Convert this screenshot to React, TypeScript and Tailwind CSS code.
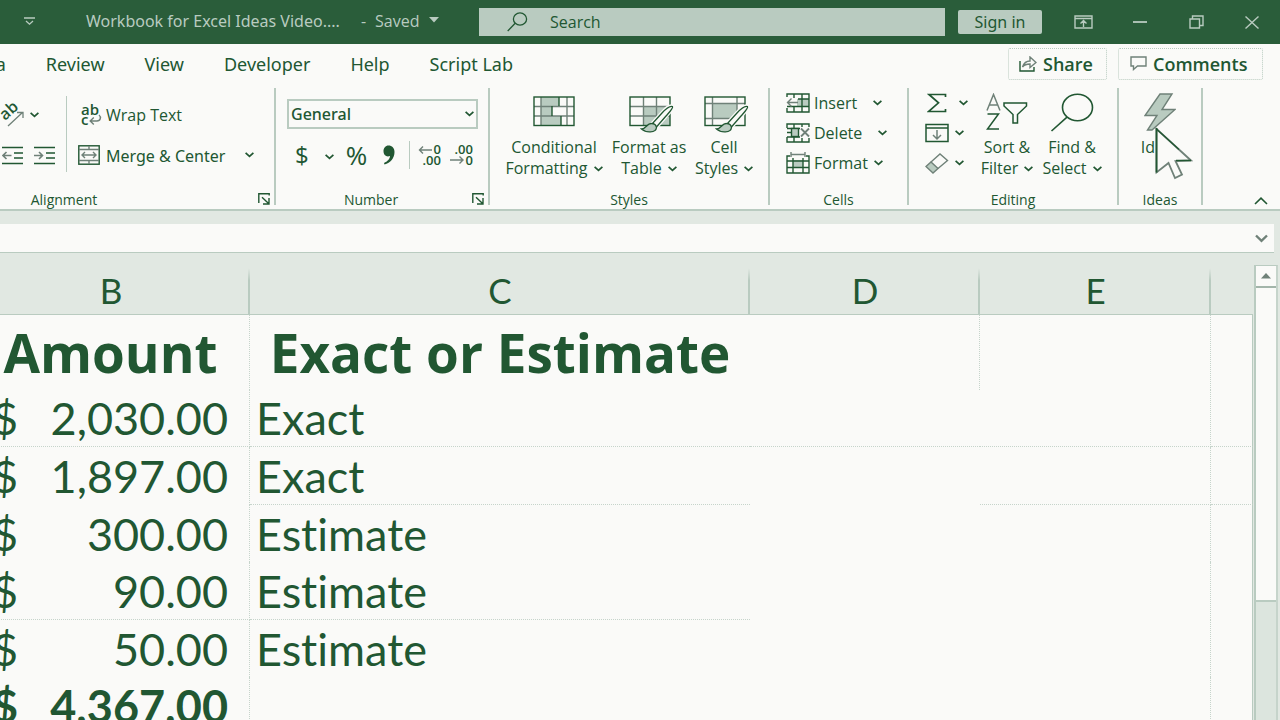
import type { ReactNode } from "react";

const DARK = "#215732";
const MID = "#6f8178";
const LIGHT = "#b9cbc0";
const PAPER = "#fafaf8";

function Chevron({ className = "" }: { className?: string }) {
  return (
    <svg className={`shrink-0 ${className}`} width="9" height="6" viewBox="0 0 9 6" fill="none" stroke={DARK} strokeWidth="1.7">
      <path d="M0.6 0.8 L4.5 4.4 L8.4 0.8" />
    </svg>
  );
}

function Launcher() {
  return (
    <svg width="12" height="12" viewBox="0 0 12 12" fill="none" stroke={DARK} strokeWidth="1.4">
      <path d="M0.8 10 V0.8 H11.2 V2.5" />
      <path d="M4 4.2 L10.6 10.6 M11 5 V11 H5" />
    </svg>
  );
}

function OrientationIcon() {
  return (
    <svg width="24" height="26" viewBox="0 0 24 26" fill="none" stroke={MID} strokeWidth="1.3">
      <text x="5" y="19" transform="rotate(-42 5 19)" fontFamily="Open Sans" fontWeight="600" fontSize="16" fill={DARK} stroke="none">ab</text>
      <path d="M8 24 L22.5 10.5 M17 10.5 H23 V16" />
    </svg>
  );
}

function IndentIcon({ outward = false }: { outward?: boolean }) {
  return (
    <svg width="21" height="19" viewBox="0 0 21 19" fill="none" stroke={DARK} strokeWidth="1.6">
      <path d="M0 1.5 H21 M12 7 H21 M12 12 H21 M0 17.5 H21" />
      <path stroke={MID} d={outward ? "M9.5 9.5 H1 M4.5 6 L1 9.5 L4.5 13" : "M0 9.5 H8.5 M5 6 L8.5 9.5 L5 13"} />
    </svg>
  );
}

function WrapIcon() {
  return (
    <svg width="21" height="22" viewBox="0 0 21 22" fill="none" stroke={MID} strokeWidth="1.4">
      <text x="0" y="11" fontFamily="Open Sans" fontWeight="600" fontSize="15" fill={DARK} stroke="none">ab</text>
      <text x="0" y="21" fontFamily="Open Sans" fontWeight="600" fontSize="15" fill={DARK} stroke="none">c</text>
      <path d="M18 11 C20.5 13 19.5 17 16 17 H9.5 M12.8 13.4 L9.2 17 L12.8 20.6" />
    </svg>
  );
}

function MergeIcon() {
  return (
    <svg width="22" height="20" viewBox="0 0 22 20" fill="none" stroke={DARK} strokeWidth="1.4">
      <rect x="0.8" y="0.8" width="20.4" height="18.4" />
      <path d="M1 4.5 H21 M1 15.5 H21 M11 1 V4.5 M11 15.5 V19" stroke={MID} />
      <path d="M4 10 H18 M7 7 L4 10 L7 13 M15 7 L18 10 L15 13" stroke={MID} />
    </svg>
  );
}

function DecimalIcon({ increase = false }: { increase?: boolean }) {
  return (
    <svg width="24" height="22" viewBox="0 0 24 22" fill="none" stroke={MID} strokeWidth="1.4">
      <g fontFamily="Open Sans" fontSize="13" fontWeight="600" fill={DARK} stroke="none" textAnchor="end">
        <text x="23" y="10">{increase ? "0" : ".00"}</text>
        <text x="23" y="21">{increase ? ".00" : "0"}</text>
      </g>
      {increase ? <path d="M14 6 H1.5 M5 2.5 L1.5 6 L5 9.5" /> : <path d="M0 16 H13 M9.5 12.5 L13 16 L9.5 19.5" />}
    </svg>
  );
}

function Brush() {
  return (
    <g>
      <path d="M43.5 10.5 C41 9.5 37 12.5 33 17 L23 28 L27 31.5 L37 20 C41.5 15 44.5 12 43.5 10.5 Z" fill={PAPER} stroke={PAPER} strokeWidth="4" />
      <path d="M43.5 10.5 C41 9.5 37 12.5 33 17 L23 28 L27 31.5 L37 20 C41.5 15 44.5 12 43.5 10.5 Z" fill={PAPER} stroke={DARK} strokeWidth="1.3" />
      <path d="M22.5 27.5 C18 27 17.5 33 12.5 33 C17 37 27 37 27.5 31.5 C27 28.5 25 27.5 22.5 27.5 Z" fill={LIGHT} stroke={DARK} strokeWidth="1.3" />
    </g>
  );
}

function ConditionalIcon() {
  return (
    <svg width="42" height="38" viewBox="0 0 42 38" fill="none" strokeWidth="1.4">
      <path d="M8 1 H26 V10 H8 Z M8 10 H19 V20 H8 Z M8 20 H28 V29 H8 Z" fill={LIGHT} />
      <path d="M1 10.5 H41 M1 20 H41 M34 1 V29 M8 1 V29" stroke={MID} />
      <path d="M26 1 V10 M19 10 V20 M28 20 V29" stroke={DARK} />
      <rect x="1" y="1" width="40" height="28.5" stroke={DARK} />
    </svg>
  );
}

function TableStyleIcon() {
  return (
    <svg className="ml-1.5" width="46" height="38" viewBox="0 0 46 38" fill="none" strokeWidth="1.4">
      <path d="M15 10.5 H41 V29.5 H15 Z" fill={LIGHT} />
      <path d="M1 10.5 H41 M1 20 H41 M14.5 1 V29 M27.5 1 V29" stroke={MID} />
      <rect x="1" y="1" width="40" height="28.5" stroke={DARK} />
      <Brush />
    </svg>
  );
}

function CellStyleIcon() {
  return (
    <svg className="ml-1.5" width="46" height="38" viewBox="0 0 46 38" fill="none" strokeWidth="1.4">
      <path d="M8 7.5 H33 V22.5 H8 Z" fill={LIGHT} />
      <path d="M1 7.5 H41 M1 22.5 H33 M8.5 1 V29 M33 1 V22" stroke={MID} />
      <rect x="1" y="1" width="40" height="28.5" stroke={DARK} />
      <Brush />
    </svg>
  );
}

function InsertIcon() {
  return (
    <svg width="24" height="20" viewBox="0 0 24 20" fill="none" stroke={DARK} strokeWidth="1.4">
      <path d="M11 6 H23 V13 H11 Z" fill={LIGHT} stroke="none" />
      <path d="M1 4 V1 H23 V19 H1 V15 M1 13.5 H23 M8 1 V5 M16 1 V19 M8 14 V19 M12 6 H23" />
      <path d="M12 9.5 H1.5 M5.5 5.5 L1.5 9.5 L5.5 13.5" stroke={MID} />
    </svg>
  );
}

function DeleteIcon() {
  return (
    <svg width="24" height="20" viewBox="0 0 24 20" fill="none" stroke={DARK} strokeWidth="1.4">
      <path d="M1 5 V1 H23 V4 M1 5.5 H14 M8 1 V5 M16 1 V4 M1 14 V19 H23 V15 M1 14 H14 M8 14 V19 M16 15 V19 M1 9.5 H5" />
      <rect x="5.5" y="5.5" width="7" height="8" fill={LIGHT} />
      <path d="M15 5.5 L23 13.5 M23 5.5 L15 13.5" stroke={MID} strokeWidth="1.8" />
    </svg>
  );
}

function FormatIcon() {
  return (
    <svg width="24" height="22" viewBox="0 0 24 22" fill="none" stroke={DARK} strokeWidth="1.4">
      <path d="M7 8 H17 V15 H7 Z" fill={LIGHT} stroke="none" />
      <path d="M4 4 H1 V21 H23 V4 H20 M1 9 H23 M1 15.5 H23 M7 6 V21 M17 6 V21" />
      <path d="M5 2.5 H19 M5 0 V5 M19 0 V5" stroke={MID} />
    </svg>
  );
}

function SigmaIcon() {
  return (
    <svg width="20" height="20" viewBox="0 0 20 20" fill="none" stroke={DARK} strokeWidth="1.7">
      <path d="M18.5 4 V1.5 H2 L11.5 9.8 L1.5 18.5 H18.5 V16" />
    </svg>
  );
}

function FillIcon() {
  return (
    <svg width="24" height="20" viewBox="0 0 24 20" fill="none" stroke={DARK} strokeWidth="1.5">
      <path d="M1 1.5 H23 V18.5 H1 Z M1 5 H23" />
      <path d="M12 7 V16 M8 12 L12 16 L16 12" stroke={MID} />
    </svg>
  );
}

function EraserIcon() {
  return (
    <svg width="24" height="21" viewBox="0 0 24 21" fill="none" stroke={MID} strokeWidth="1.4">
      <path d="M1 13.5 L6 9 L13 15.5 L8 20 Z" fill={LIGHT} />
      <path d="M6 9 L15 1 L22.5 7.5 L13 15.5" />
    </svg>
  );
}

function SortFilterIcon() {
  return (
    <svg width="42" height="38" viewBox="0 0 42 38" fill="none" stroke={DARK} strokeWidth="1.5">
      <path d="M1 17.5 L7.5 1.5 L14 17.5 M3.5 12 H11.5" stroke={MID} />
      <path d="M1.5 21 H12.5 L1.5 36 H13" />
      <path d="M18 10 H40.5 V13 L31.5 21.5 V30 H27 V21.5 L18 13 Z" />
    </svg>
  );
}

function FindIcon() {
  return (
    <svg width="44" height="40" viewBox="0 0 44 40" fill="none" stroke={DARK} strokeWidth="1.6">
      <ellipse cx="27.5" cy="14.5" rx="15" ry="13.3" />
      <path d="M17 24.2 L1.5 38" />
    </svg>
  );
}

function SearchIcon() {
  return (
    <svg className="shrink-0" width="21" height="20" viewBox="0 0 21 20" fill="none" stroke={DARK} strokeWidth="1.3">
      <ellipse cx="13" cy="7" rx="6.6" ry="6.1" />
      <path d="M8.2 11.3 L0.7 19" />
    </svg>
  );
}

function BoltIcon() {
  return (
    <svg width="32" height="38" viewBox="0 0 32 38" fill={LIGHT} stroke={MID} strokeWidth="1.4">
      <path d="M16 1 H28 L18 16.5 H31 L8 37 H3.5 L13 22.5 H1 Z" />
    </svg>
  );
}

function PointerIcon() {
  return (
    <svg className="absolute left-9 top-[39px] z-10" width="38" height="54" viewBox="0 0 38 54" fill={PAPER} stroke={MID} strokeWidth="1.8">
      <path d="M1.5 2 L36 33.5 L20.5 34 L27 47.5 L20 51 L13.5 36 L1.5 45.5 Z" />
      <path d="M1.5 1 V45.5" stroke={DARK} />
      <path d="M1.5 2 L24 22.5 M36 33.5 H21" stroke={DARK} strokeWidth="1.3" />
    </svg>
  );
}

function Group({ label, className, launcher, children }: { label: string; className: string; launcher?: boolean; children: ReactNode }) {
  return (
    <section aria-label={label} className={`relative flex shrink-0 flex-col border-r-2 border-[#b9cbc0] ${className}`}>
      <div className="h-[101px]">{children}</div>
      <div className="h-4 text-center text-sm leading-[22px]">{label}</div>
      {launcher && (
        <button aria-label={`${label} settings`} className="absolute right-1 bottom-0">
          <Launcher />
        </button>
      )}
    </section>
  );
}

function BigButton({ icon, top, bottom, className = "" }: { icon: ReactNode; top: string; bottom?: string; className?: string }) {
  return (
    <button className={`flex flex-col items-center whitespace-nowrap text-base leading-[21px] ${className}`}>
      <span className="flex h-[41px] items-start justify-center">{icon}</span>
      <span>{top}</span>
      {bottom && (
        <span className="flex items-center gap-1.5">
          {bottom}
          <Chevron />
        </span>
      )}
    </button>
  );
}

function SmallButton({ icon, text, gap }: { icon: ReactNode; text: string; gap: string }) {
  return (
    <button className="flex h-[30px] items-center whitespace-nowrap text-base">
      <span className="w-7">{icon}</span>
      <span className={gap}>{text}</span>
      <Chevron />
    </button>
  );
}

function TitleBar() {
  return (
    <header className="flex h-11 items-center bg-[#2a5d3a] text-[#b9cbc0]">
      <div className="flex w-[479px] shrink-0 items-center whitespace-nowrap pb-0.5 pl-6 text-base">
        <button aria-label="Customize toolbar" className="mr-[51px]">
          <svg width="11" height="9" viewBox="0 0 11 9" fill="none" stroke={LIGHT} strokeWidth="1.3">
            <path d="M0 1 H11 M2 4 L5.5 7.2 L9 4" />
          </svg>
        </button>
        <span className="w-[275px] font-['Noto_Sans','Open_Sans',sans-serif]">Workbook for Excel Ideas Video....</span>
        <span className="w-3.5">-</span>
        <button className="flex items-center gap-2.5">
          Saved
          <svg className="mb-0.5" width="10" height="6" viewBox="0 0 10 6" fill={LIGHT}><path d="M0 0 H10 L5 5.5 Z" /></svg>
        </button>
      </div>
      <label className="flex h-7 flex-1 items-center bg-[#b9cbc0] pl-7">
        <SearchIcon />
        <input type="text" aria-label="Search" placeholder="Search" className="ml-[22px] w-full bg-transparent text-base text-[#215732] outline-none placeholder:text-[#215732]" />
      </label>
      <button className="ml-[13px] h-6 w-[84px] shrink-0 rounded-[2px] bg-[#b9cbc0] font-['Noto_Sans','Open_Sans',sans-serif] text-base leading-6 text-[#215732]">Sign in</button>
      <div className="flex w-[238px] shrink-0 items-center pl-8">
        <button aria-label="Ribbon display options" className="mr-10">
          <svg width="19" height="14" viewBox="0 0 19 14" fill="none" stroke={LIGHT} strokeWidth="1.4">
            <path d="M1 1 H18 V13 H1 Z M1 3.5 H18 M9.5 12 V6 M6.5 8.5 L9.5 5.5 L12.5 8.5" />
          </svg>
        </button>
        <button aria-label="Minimize" className="mr-[42px]">
          <svg width="14" height="14" viewBox="0 0 14 14" stroke={LIGHT} strokeWidth="1.8"><path d="M0 7 H14" /></svg>
        </button>
        <button aria-label="Restore" className="mr-[41px]">
          <svg width="15" height="14" viewBox="0 0 15 14" fill="none" stroke={LIGHT} strokeWidth="1.4">
            <path d="M1 4 H10.5 V13 H1 Z M3.5 4 V1 H14 V10.5 H10.5" />
          </svg>
        </button>
        <button aria-label="Close">
          <svg width="14" height="13" viewBox="0 0 14 13" stroke={LIGHT} strokeWidth="1.4"><path d="M0.5 0.5 L13.5 12.5 M13.5 0.5 L0.5 12.5" /></svg>
        </button>
      </div>
    </header>
  );
}

function TabBar() {
  return (
    <nav className="flex h-[41px] items-center overflow-hidden pb-0.5">
      <div className="-ml-[34px] flex gap-10 whitespace-nowrap font-['Noto_Sans','Open_Sans',sans-serif] text-lg">
        {["Data", "Review", "View", "Developer", "Help", "Script Lab"].map((tab) => (
          <a key={tab} href="#">{tab}</a>
        ))}
      </div>
      <button className="ml-auto flex h-8 w-[99px] shrink-0 items-center rounded-[2px] border border-dotted border-[#b9cbc0] pl-2.5 text-lg leading-5 font-semibold">
        <svg className="mr-1.5" width="18" height="16" viewBox="0 0 18 16" fill="none" stroke={MID} strokeWidth="1.4">
          <path d="M1 5 V15 H15 V11" stroke={DARK} />
          <path d="M3.5 11 C5 6.5 7.5 5 11 5 V1 L17 6.5 L11 11.5 V8 C8 8 5.5 8.5 3.5 11 Z" />
        </svg>
        Share
      </button>
      <button className="ml-[11px] mr-[17px] flex h-8 w-[145px] shrink-0 items-center rounded-[2px] border border-dotted border-[#b9cbc0] pl-[11px] text-lg leading-5 font-semibold">
        <svg className="mr-1.5" width="17" height="15" viewBox="0 0 17 15" fill="none" stroke={MID} strokeWidth="1.4">
          <path d="M1 1 H16 V10 H7.5 L3.5 13.5 V10 H1 Z" />
        </svg>
        Comments
      </button>
    </nav>
  );
}

function Ribbon() {
  return (
    <div className="flex h-[126px] border-b-2 border-[#b9cbc0] pt-[3px] pb-1">
      <Group label="Alignment" className="w-[276px] [&>div:nth-child(2)]:pr-[146px]" launcher>
        <div className="flex h-full pt-2">
          <div className="w-[66px]">
            <button aria-label="Orientation" className="flex h-[38px] items-center gap-1.5">
              <OrientationIcon />
              <Chevron />
            </button>
            <div className="flex h-[42px] items-center gap-[11px] pl-0.5">
              <button aria-label="Decrease indent"><IndentIcon outward /></button>
              <button aria-label="Increase indent"><IndentIcon /></button>
            </div>
          </div>
          <div className="h-[76px] w-px bg-[#b9cbc0]" />
          <div className="whitespace-nowrap pl-[11px] text-base">
            <button className="flex h-[38px] items-center">
              <span className="w-7 pl-[3px]"><WrapIcon /></span>
              Wrap Text
            </button>
            <button className="flex h-[42px] items-center">
              <span className="w-7"><MergeIcon /></span>
              <span className="pt-0.5 font-['Noto_Sans','Open_Sans',sans-serif]">Merge &amp; Center</span>
              <Chevron className="ml-5" />
            </button>
          </div>
        </div>
      </Group>

      <Group label="Number" className="w-[214px] [&>div:nth-child(2)]:pr-[22px]" launcher>
        <div className="pl-[11px] pt-[11px]">
          <div className="relative w-[191px]">
            <select aria-label="Number format" className="h-[30px] w-full appearance-none border-2 border-[#b9cbc0] bg-transparent pl-0.5 font-['Noto_Sans','Open_Sans',sans-serif] text-base font-medium">
              <option>General</option>
            </select>
            <Chevron className="pointer-events-none absolute right-1 top-3" />
          </div>
          <div className="flex h-[52px] items-center text-2xl">
            <button aria-label="Currency" className="flex items-center pl-2">
              $<Chevron className="ml-4 mt-1" />
            </button>
            <button className="ml-3 text-[26px]">%</button>
            <button aria-label="Comma style" className="ml-4">
              <svg width="12" height="20" viewBox="0 0 12 20" fill={DARK}>
                <path d="M5.5 0.5 C9 0.5 11.5 3 11.5 7 C11.5 13 7.5 18 1.5 19.5 L1 18 C4.5 16.5 7 13.5 7 11 C3.5 12.5 0.5 10 0.5 6 C0.5 3 2.5 0.5 5.5 0.5 Z" />
              </svg>
            </button>
            <div className="ml-3.5 h-7 w-px bg-[#b9cbc0]" />
            <button aria-label="Increase decimal" className="ml-2"><DecimalIcon increase /></button>
            <button aria-label="Decrease decimal" className="ml-2"><DecimalIcon /></button>
          </div>
        </div>
      </Group>

      <Group label="Styles" className="w-[280px]">
        <div className="flex pt-2">
          <BigButton className="ml-3 w-[104px]" icon={<ConditionalIcon />} top="Conditional" bottom="Formatting" />
          <BigButton className="w-[86px]" icon={<TableStyleIcon />} top="Format as" bottom="Table" />
          <BigButton className="w-16" icon={<CellStyleIcon />} top="Cell" bottom="Styles" />
        </div>
      </Group>

      <Group label="Cells" className="w-[139px]">
        <div className="pl-4">
          <SmallButton icon={<InsertIcon />} text="Insert" gap="pr-4" />
          <SmallButton icon={<DeleteIcon />} text="Delete" gap="pr-4" />
          <SmallButton icon={<FormatIcon />} text="Format" gap="pr-1.5" />
        </div>
      </Group>

      <Group label="Editing" className="w-[210px]">
        <div className="flex">
          <div className="w-[66px] pl-4">
            <button aria-label="AutoSum" className="flex h-[30px] items-center gap-3 pl-0.5"><SigmaIcon /><Chevron /></button>
            <button aria-label="Fill" className="flex h-[30px] items-center gap-1.5"><FillIcon /><Chevron /></button>
            <button aria-label="Clear" className="flex h-[30px] items-center gap-1.5"><EraserIcon /><Chevron /></button>
          </div>
          <BigButton className="w-16 pt-[5px] [&>span:first-child]:h-11" icon={<SortFilterIcon />} top="Sort &amp;" bottom="Filter" />
          <BigButton className="w-[66px] pt-[5px] [&>span:first-child]:h-11" icon={<FindIcon />} top="Find &amp;" bottom="Select" />
        </div>
      </Group>

      <Group label="Ideas" className="w-[84px]">
        <BigButton className="w-full pt-[5px] [&>span:first-child]:h-11 [&>span:nth-child(2)]:pr-6" icon={<BoltIcon />} top="Id" />
        <PointerIcon />
      </Group>

      <div className="flex flex-1 items-end justify-end pr-3">
        <button aria-label="Collapse ribbon" className="h-2">
          <svg width="14" height="8" viewBox="0 0 14 8" fill="none" stroke={DARK} strokeWidth="1.6"><path d="M1 7 L7 1.2 L13 7" /></svg>
        </button>
      </div>
    </div>
  );
}

function FormulaBar() {
  return (
    <div className="bg-[#e1e8e2] pt-[13px] pr-1.5">
      <div className="flex h-[29px] items-center justify-end border-b border-[#b9cbc0] bg-[#fafaf8] pr-1.5">
        <input type="text" aria-label="Formula" className="h-full flex-1 bg-transparent outline-none" />
        <button aria-label="Expand formula bar">
          <svg width="13" height="9" viewBox="0 0 13 9" fill="none" stroke={MID} strokeWidth="2.4"><path d="M1 1.5 L6.5 6.8 L12 1.5" /></svg>
        </button>
      </div>
    </div>
  );
}

type Row = { amount: string; kind: string; total?: boolean; lines: string };

// Each letter in `lines` names a column whose lower grid line is drawn.
const rows: Row[] = [
  { amount: "2,030.00", kind: "Exact", lines: "BCDEF" },
  { amount: "1,897.00", kind: "Exact", lines: "CEF" },
  { amount: "300.00", kind: "Estimate", lines: "" },
  { amount: "90.00", kind: "Estimate", lines: "BC" },
  { amount: "50.00", kind: "Estimate", lines: "" },
  { amount: "4,367.00", kind: "", total: true, lines: "" },
];

const GRID = "border-dotted border-[#c6d4cb]";

function Sheet() {
  const under = (row: Row, column: string) => (row.lines.includes(column) ? "border-b" : "");
  const head = "bg-[linear-gradient(to_bottom,transparent_25%,#b9cbc0_45%)] bg-[length:2px_100%] bg-right bg-no-repeat p-0 pt-3";
  return (
    <div className="flex flex-1 overflow-hidden bg-[#e1e8e2]">
      <div className="min-w-0 flex-1 overflow-hidden">
        <table className="-ml-7 w-[calc(100%+28px)] table-fixed border-separate border-spacing-0 font-[Lato,sans-serif] text-[45px] [font-variant-ligatures:none]">
          <colgroup>
            <col className="w-[278px]" />
            <col className="w-[500px]" />
            <col className="w-[230px]" />
            <col className="w-[231px]" />
            <col />
          </colgroup>
          <thead>
            <tr className="h-[62px] text-[35px] leading-[48px] [&>th]:border-b [&>th]:border-[#b9cbc0] [&>th]:font-normal">
              <th className={head}>B</th>
              <th className={head}>C</th>
              <th className={head}>D</th>
              <th className={head}>E</th>
              <th />
            </tr>
          </thead>
          <tbody className="bg-[#fafaf8]">
            <tr className="h-[75px] font-['Open_Sans',sans-serif] text-[53px] leading-[74px] font-bold">
              <td className={`border-r p-0 text-center ${GRID}`}>Amount</td>
              <td className="p-0 text-center">Exact or Estimate</td>
              <td className={`border-r ${GRID}`} />
              <td className={`border-r ${GRID}`} />
              <td className="border-r border-[#b9cbc0]" />
            </tr>
            {rows.map((row) => (
              <tr key={row.amount} className={`h-[57px] leading-[56px] odd:h-[58px] ${row.total ? "font-bold" : ""}`}>
                <td className={`border-r p-0 ${GRID} ${under(row, "B")}`}>
                  <div className="flex justify-between pl-5 pr-[21px]">
                    <span>$</span>
                    <span>{row.amount}</span>
                  </div>
                </td>
                <td className={`p-0 pl-1.5 ${GRID} ${under(row, "C")}`}>{row.kind}</td>
                <td className={`${GRID} ${under(row, "D")}`} />
                <td className={`border-r ${GRID} ${under(row, "E")}`} />
                <td className={`border-r border-r-[#b9cbc0] ${row.lines.includes("F") ? "border-b border-b-[#c6d4cb] [border-bottom-style:dotted]" : ""}`} />
              </tr>
            ))}
          </tbody>
        </table>
      </div>
      <div className="ml-px mr-0.5 mt-3 flex w-6 shrink-0 flex-col border-x-2 border-t border-[#b9cbc0] border-r-[#c6d4cb] bg-[#dce5de]">
        <button aria-label="Scroll up" className="flex h-[22px] items-center justify-center border-b-2 border-[#a3b5aa] bg-[#fafaf8]">
          <svg width="10" height="6" viewBox="0 0 10 6" fill={MID}><path d="M5 0 L10 5.5 H0 Z" /></svg>
        </button>
        <div className="h-[314px] border-b-2 border-[#b9cbc0] bg-[#fafaf8]" />
      </div>
    </div>
  );
}

export default function App() {
  return (
    <main className="flex h-screen flex-col overflow-hidden bg-[#fafaf8] font-['Open_Sans','Noto_Sans',sans-serif] text-[#215732]">
      <TitleBar />
      <TabBar />
      <Ribbon />
      <FormulaBar />
      <Sheet />
    </main>
  );
}
